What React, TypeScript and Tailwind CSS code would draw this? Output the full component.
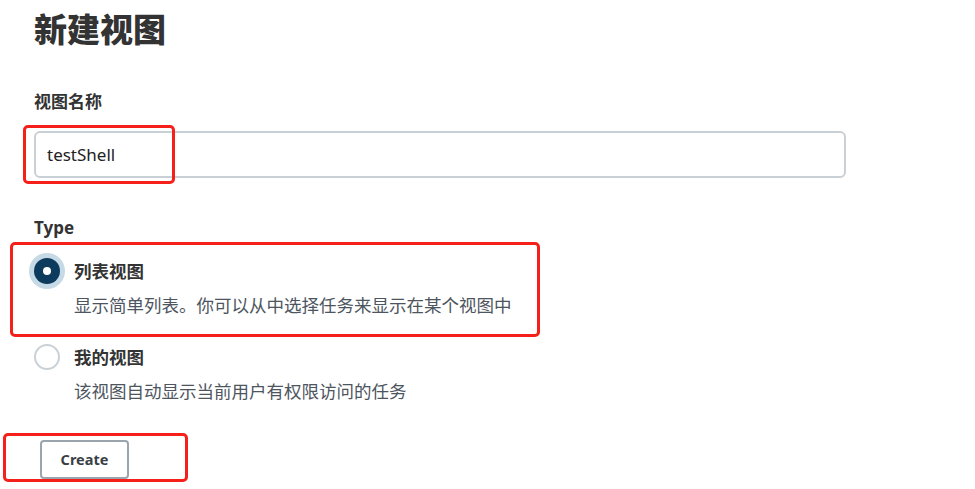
import React from "react";

const font = { fontFamily: '"Noto Sans", "Noto Sans CJK SC", sans-serif' };

export default function App() {
  return (
    <div
      className="relative w-[975px] h-[489px] bg-white text-[#333] overflow-hidden"
      style={font}
    >
      <div className="flex flex-col items-start pl-[34px] pt-[10px]">
        <h1 className="text-[33px] leading-[40px] font-extrabold text-[#333]">新建视图</h1>
        <div className="mt-[40px] text-[17px] leading-[24px] font-bold">视图名称</div>
        <div className="mt-[17px] w-[812px] h-[47px] rounded-[6px] border-2 border-[#c8d0d5] flex items-center px-[11px] text-[17px] text-[#222]">
          testShell
        </div>
        <div className="mt-[38px] text-[17px] leading-[24px] font-bold">Type</div>

        <div className="mt-[18px] flex items-center gap-[14px] h-[26px]">
          <div className="w-[26px] h-[26px] rounded-full bg-[#0d3b5e] shadow-[0_0_0_5px_#c5d9e6] flex items-center justify-center">
            <div className="w-[8px] h-[8px] rounded-full bg-white" />
          </div>
          <div className="text-[17.5px] leading-[26px] font-bold">列表视图</div>
        </div>
        <div className="mt-[8px] ml-[40px] text-[17.5px] leading-[26px] text-[#4d5560]">
          显示简单列表。你可以从中选择任务来显示在某个视图中
        </div>

        <div className="mt-[26px] flex items-center gap-[14px] h-[26px]">
          <div className="w-[26px] h-[26px] rounded-full border-2 border-[#c9d1d6] bg-white" />
          <div className="text-[17.5px] leading-[26px] font-bold">我的视图</div>
        </div>
        <div className="mt-[8px] ml-[40px] text-[17.5px] leading-[26px] text-[#4d5560]">
          该视图自动显示当前用户有权限访问的任务
        </div>

        <button className="mt-[36px] ml-[6px] w-[89px] h-[39px] rounded-[4px] border-2 border-[#9ba5ad] bg-white text-[14.5px] font-bold text-[#3a3f45] flex items-center justify-center">
          Create
        </button>
      </div>

      <div className="absolute left-[23px] top-[125px] w-[152px] h-[59px] border-[3px] border-[#f5201a] rounded-[5px]" />
      <div className="absolute left-[10px] top-[242px] w-[530px] h-[95px] border-[3px] border-[#f5201a] rounded-[5px]" />
      <div className="absolute left-[3px] top-[433px] w-[185px] h-[49px] border-[3px] border-[#f5201a] rounded-[5px]" />
    </div>
  );
}
